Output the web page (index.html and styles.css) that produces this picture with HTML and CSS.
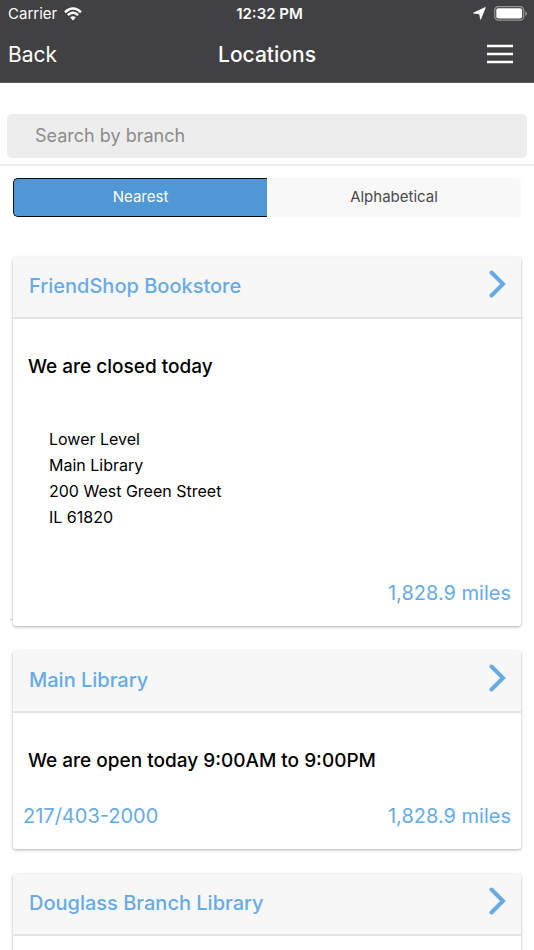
FILE: index.html
```html
<!DOCTYPE html>
<html lang="en">
<head>
<meta charset="utf-8">
<meta name="viewport" content="width=device-width, initial-scale=1">
<title>Locations</title>
<link rel="stylesheet" href="styles.css">
</head>
<body>
<header class="top">
  <div class="status">
    <div class="carrier">
      <span>Carrier</span>
      <svg class="wifi" width="18" height="14" viewBox="0 0 18 14" aria-hidden="true">
        <path d="M1 5.200Q9-2.200 17 5.200" fill="none" stroke="#fff" stroke-width="2.600"/>
        <path d="M3.800 8.200Q9 3.400 14.200 8.200" fill="none" stroke="#fff" stroke-width="2.400"/>
        <path d="M6.200 10.600Q9 7.900 11.800 10.600L9 13.400Z" fill="#fff"/>
      </svg>
    </div>
    <span class="clock">12:32 PM</span>
    <div class="indicators">
      <svg width="13" height="13" viewBox="0 0 13 13" aria-hidden="true"><path d="M12.300.500 7.600 12.300 6.600 6.900.500 6Z" fill="#fff" stroke="#fff" stroke-width=".800" stroke-linejoin="round"/></svg>
      <svg width="33" height="15" viewBox="0 0 33 15" aria-hidden="true">
        <rect x=".700" y=".700" width="29" height="13.400" rx="3.600" fill="none" stroke="#98989a" stroke-width="1.200"/>
        <rect x="2.300" y="2.300" width="25.800" height="10.200" rx="2" fill="#fff"/>
        <path d="M31.300 5v5Q33 9 33 7.500T31.300 5Z" fill="#98989a"/>
      </svg>
    </div>
  </div>
  <nav class="nav">
    <a class="back" href="#">Back</a>
    <h1 class="title">Locations</h1>
    <button class="menu" type="button" aria-label="Menu">
      <svg width="26" height="20" viewBox="0 0 26 20" aria-hidden="true"><path d="M0 2h26M0 10h26M0 18h26" stroke="#fff" stroke-width="2.600"/></svg>
    </button>
  </nav>
</header>
<main class="content">
  <form class="search">
    <input class="search-input" type="search" aria-label="Search by branch" placeholder="Search by branch">
  </form>
  <div class="sort">
    <button class="sort-option selected" type="button" aria-pressed="true">Nearest</button>
    <button class="sort-option" type="button" aria-pressed="false">Alphabetical</button>
  </div>
  <div class="cards">
    <article class="card ticked">
      <a class="card-head" href="#">
        <h2 class="name">FriendShop Bookstore</h2>
        <svg class="chevron" width="17" height="28" viewBox="0 0 17 28" aria-hidden="true"><path d="M2.500 2.500 14 14 2.500 25.500"/></svg>
      </a>
      <div class="card-body">
        <p class="hours">We are closed today</p>
        <address class="address">Lower Level<br>Main Library<br>200 West Green Street<br>IL 61820</address>
        <div class="foot"><span class="miles">1,828.9 miles</span></div>
      </div>
    </article>
    <article class="card">
      <a class="card-head" href="#">
        <h2 class="name">Main Library</h2>
        <svg class="chevron" width="17" height="28" viewBox="0 0 17 28" aria-hidden="true"><path d="M2.500 2.500 14 14 2.500 25.500"/></svg>
      </a>
      <div class="card-body">
        <p class="hours">We are open today 9:00AM to 9:00PM</p>
        <div class="foot"><a class="phone" href="tel:2174032000">217/403-2000</a><span class="miles">1,828.9 miles</span></div>
      </div>
    </article>
    <article class="card">
      <a class="card-head" href="#">
        <h2 class="name">Douglass Branch Library</h2>
        <svg class="chevron" width="17" height="28" viewBox="0 0 17 28" aria-hidden="true"><path d="M2.500 2.500 14 14 2.500 25.500"/></svg>
      </a>
      <div class="card-body"></div>
    </article>
  </div>
</main>
</body>
</html>
```
FILE: styles.css
```css
* {
  box-sizing: border-box;
}

body {
  margin: 0;
  height: 100vh;
  display: flex;
  flex-direction: column;
  background: #fff;
  color: #000;
  font-family: Inter, "Liberation Sans", sans-serif;
}

a {
  color: inherit;
  text-decoration: none;
}

button,
input {
  font: inherit;
}

.top {
  flex: none;
  background: #414042;
  color: #fff;
  border-bottom: 1px solid #5a595b;
}

.status {
  display: grid;
  grid-template-columns: 1fr auto 1fr;
  align-items: center;
  height: 27px;
  padding: 0 7px 0 8px;
  font-size: 15px;
}

.carrier {
  display: flex;
  align-items: center;
  gap: 7px;
}

.clock {
  padding-left: 4px;
  font-weight: 600;
}

.indicators {
  display: flex;
  align-items: center;
  justify-content: flex-end;
  gap: 8px;
}

.nav {
  display: grid;
  grid-template-columns: 1fr auto 1fr;
  align-items: center;
  height: 55px;
  padding: 0 8px 1px;
  font-size: 21px;
}

.title {
  margin: 0;
  font-size: 21px;
  font-weight: 500;
}

.menu {
  display: flex;
  justify-self: end;
  margin-right: 13px;
  padding: 0;
  border: 0;
  background: none;
}

.content {
  flex: 1;
  min-height: 0;
  overflow-y: auto;
  scrollbar-width: none;
}

.search {
  padding: 31px 7px 6px;
  border-bottom: 2px solid #ededed;
}

.search-input {
  display: block;
  width: 100%;
  height: 44px;
  padding: 0 28px 2px;
  border: 0;
  border-radius: 5px;
  background: #ededed;
  appearance: none;
  font-size: 18px;
}

.search-input::placeholder {
  color: #8c8c8c;
}

.sort {
  display: grid;
  grid-template-columns: 1fr 1fr;
  padding: 12px 13px 0;
}

.sort-option {
  height: 39px;
  padding: 0 0 2px;
  border: 0;
  border-radius: 0 5px 5px 0;
  background: #f8f8f8;
  color: #4a4a4a;
  font-size: 15px;
}

.sort-option.selected {
  border: 1px solid #0a0f14;
  border-right: 0;
  border-radius: 5px 0 0 5px;
  background: #5097d5;
  color: #fff;
}

.cards {
  display: grid;
  gap: 25px;
  padding: 40px 13px 25px;
}

.card {
  position: relative;
  border-radius: 3px;
  background: #fff;
  box-shadow: 0 1px 3px rgba(0, 0, 0, 0.32);
}

.ticked::before {
  content: "";
  position: absolute;
  right: 100%;
  bottom: 6px;
  width: 3px;
  height: 1px;
  background: #ccc;
}

.card-head {
  display: flex;
  align-items: center;
  justify-content: space-between;
  height: 62px;
  padding: 0 15px 2px 16px;
  border-bottom: 2px solid #e3e3e3;
  border-radius: 3px 3px 0 0;
  background: #f7f7f7;
  color: #66abe6;
}

.name {
  margin: 0;
  font-size: 20px;
  font-weight: 500;
}

.chevron {
  margin-bottom: 4px;
}

.chevron path {
  fill: none;
  stroke: #66abe6;
  stroke-width: 4;
  stroke-linecap: round;
}

.card-body {
  min-height: 100px;
  padding: 35px 10px 20px;
  line-height: 26px;
}

.hours {
  margin: 0 5px 29px;
  font-size: 19px;
  font-weight: 500;
}

.address {
  margin: 46px 26px 50px;
  font-size: 16px;
  font-style: normal;
}

.foot {
  display: flex;
  color: #66abe6;
  font-size: 20px;
}

.miles {
  margin-left: auto;
}
```
